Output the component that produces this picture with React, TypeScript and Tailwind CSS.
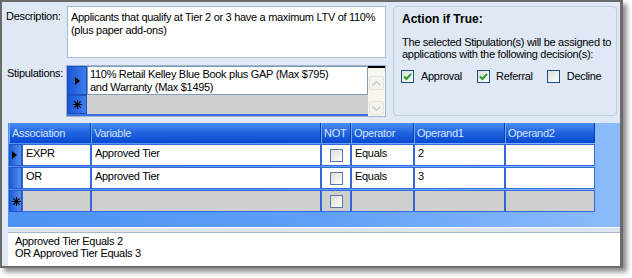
import type { ReactNode } from "react";

function Check({ checked }: { checked?: boolean }) {
  return (
    <span className="flex h-[13px] w-[13px] items-center justify-center border border-[#1c5180] bg-gradient-to-br from-[#dcdcd6] to-white">
      {checked && (
        <svg width="9" height="9" viewBox="0 0 9 9">
          <path d="M1 4.5 L3.5 7 L8 1.8" fill="none" stroke="#21a121" strokeWidth="2" />
        </svg>
      )}
    </span>
  );
}

function GridCheck() {
  return (
    <span className="block h-[13px] w-[13px] border border-[#5b7ca6] bg-gradient-to-br from-[#dcdcd6] to-white" />
  );
}

function Arrow() {
  return (
    <svg width="5" height="8" viewBox="0 0 5 8">
      <path d="M0 0 L5 4 L0 8 Z" fill="#000" />
    </svg>
  );
}

function Star() {
  return (
    <svg width="9" height="9" viewBox="0 0 9 9">
      <path d="M4.5 0 V9 M0 4.5 H9 M1.3 1.3 L7.7 7.7 M7.7 1.3 L1.3 7.7" stroke="#000" strokeWidth="1.2" />
    </svg>
  );
}

const cols = [
  { key: "assoc", w: "w-[69px]" },
  { key: "var", w: "w-[230px]" },
  { key: "not", w: "w-[30px]" },
  { key: "op", w: "w-[63px]" },
  { key: "o1", w: "w-[91px]" },
  { key: "o2", w: "w-[90px]" },
];

const rows = [
  { marker: "arrow", cells: ["EXPR", "Approved Tier", "", "Equals", "2", ""] },
  { marker: "", cells: ["OR", "Approved Tier", "", "Equals", "3", ""] },
];

function HeaderCell({ w, children }: { w: string; children: ReactNode }) {
  return (
    <div
      className={`${w} flex h-full items-center border-r border-[#0b3fa8] bg-gradient-to-b from-[#4a8cf2] via-[#1f63e0] to-[#0848cf] pl-[3px] text-[#d6e5ff] shadow-[inset_1px_0_0_#6fa3f5]`}
    >
      {children}
    </div>
  );
}

function RowHeader({ marker }: { marker: string }) {
  return (
    <div className="flex h-full w-[13px] items-center justify-start border border-[#2254c8] bg-gradient-to-r from-[#1d5bd6] to-[#5590ef] pl-[2px]">
      {marker === "arrow" && <Arrow />}
      {marker === "star" && <Star />}
    </div>
  );
}

export default function App() {
  return (
    <div className="h-[278px] w-[632px] bg-white font-['Liberation_Sans',Arial,sans-serif] text-[11px] leading-[13px] tracking-[-0.3px] text-black">
      <div className="flex h-[268px] w-[623px] flex-col border-b-2 border-l-2 border-r-[3px] border-t-2 border-[#6b6b6b] bg-[#dfe8f4] shadow-[4px_4px_5px_rgba(0,0,0,0.45)]">
        {/* top section */}
        <div className="flex h-[121px] pl-1 pr-[3px] pt-1">
          <div className="flex w-[380px] flex-col">
            <div className="flex">
              <div className="w-[61px] pt-[4px]">Description:</div>
              <div className="h-[52px] w-[319px] border border-[#a5bcd9] bg-white px-[3px] pt-[4px]">
                Applicants that qualify at Tier 2 or 3 have a maximum LTV of 110%
                <br />
                (plus paper add-ons)
              </div>
            </div>
            <div className="mt-[7px] flex">
              <div className="w-[61px] pl-px pt-[2px]">Stipulations:</div>
              <div className="flex h-[52px] w-[320px] border border-[#9db3cf] bg-[#cfcfcf]">
                <div className="flex w-[301px] flex-col">
                  <div className="flex h-[29px]">
                    <div className="flex w-[20px] items-center justify-center border border-[#1c4fc0] bg-gradient-to-r from-[#1a56d2] to-[#3f7ded]">
                      <Arrow />
                    </div>
                    <div className="flex-1 border border-[#7f9db9] bg-white pl-[2px] pt-[1px]">
                      110% Retail Kelley Blue Book plus GAP (Max $795)
                      <br />
                      and Warranty (Max $1495)
                    </div>
                  </div>
                  <div className="flex h-[21px] border-b-2 border-[#3d72e0]">
                    <div className="flex w-[20px] items-center justify-center border border-[#1c4fc0] bg-gradient-to-r from-[#1a56d2] to-[#3f7ded]">
                      <Star />
                    </div>
                    <div className="flex-1 bg-[#cfcfcf]" />
                  </div>
                </div>
                <div className="flex w-[17px] flex-col items-center border-t-2 border-black bg-[#f7f7f0] pt-[8px]">
                  <div className="flex h-[14px] w-[15px] items-center justify-center rounded-[2px] border border-[#e4e4dc] bg-[#f4f4ee]">
                    <svg width="9" height="5" viewBox="0 0 9 5">
                      <path d="M0.5 4.5 L4.5 0.8 L8.5 4.5" fill="none" stroke="#c8c8c0" strokeWidth="1.4" />
                    </svg>
                  </div>
                  <div className="flex-1" />
                  <div className="mb-[1px] flex h-[14px] w-[15px] items-center justify-center rounded-[2px] border border-[#e4e4dc] bg-[#f4f4ee]">
                    <svg width="9" height="5" viewBox="0 0 9 5">
                      <path d="M0.5 0.5 L4.5 4.2 L8.5 0.5" fill="none" stroke="#c8c8c0" strokeWidth="1.4" />
                    </svg>
                  </div>
                </div>
              </div>
            </div>
          </div>
          <div className="ml-[7px] h-[110px] w-[224px] rounded-[4px] border border-[#c3cedb] pl-[8px] pt-[5px]">
            <div className="text-[12px] font-bold leading-[15px] tracking-normal">Action if True:</div>
            <div className="mt-[9px] whitespace-nowrap leading-[12px]">
              The selected Stipulation(s) will be assigned to
              <br />
              applications with the following decision(s):
            </div>
            <div className="mt-[10px] flex items-center">
              <span className="-ml-[1px]">
                <Check checked />
              </span>
              <span className="ml-[7px]">Approval</span>
              <span className="ml-[15px]">
                <Check checked />
              </span>
              <span className="ml-[6px]">Referral</span>
              <span className="ml-[14px]">
                <Check />
              </span>
              <span className="ml-[7px]">Decline</span>
            </div>
          </div>
        </div>

        {/* criteria grid */}
        <div className="ml-[6px] flex h-[104px] w-[612px] flex-col bg-gradient-to-r from-[#4d92f4] via-[#5ea0f6] to-[#8cbcfa] pl-px">
          <div className="flex h-[20px] w-[586px]">
            <HeaderCell w="w-[82px]">Association</HeaderCell>
            <HeaderCell w="w-[230px]">Variable</HeaderCell>
            <HeaderCell w="w-[30px]">NOT</HeaderCell>
            <HeaderCell w="w-[63px]">Operator</HeaderCell>
            <HeaderCell w="w-[91px]">Operand1</HeaderCell>
            <HeaderCell w="w-[90px]">Operand2</HeaderCell>
          </div>
          {rows.map((r, i) => (
            <div key={i} className="mt-px flex h-[22px]">
              <RowHeader marker={r.marker} />
              {cols.map((c, j) => (
                <div
                  key={c.key}
                  className={`${c.w} flex h-full border border-[#3468dc] bg-white ${
                    c.key === "not" ? "items-center justify-center" : "pl-[3px] pt-[2px]"
                  }`}
                >
                  {c.key === "not" ? <GridCheck /> : r.cells[j]}
                </div>
              ))}
            </div>
          ))}
          <div className="mt-px flex h-[22px]">
            <RowHeader marker="star" />
            {cols.map((c) => (
              <div
                key={c.key}
                className={`${c.w} flex h-full items-center justify-center border border-[#3468dc] bg-[#cfcfcf]`}
              >
                {c.key === "not" && <GridCheck />}
              </div>
            ))}
          </div>
        </div>

        <div className="ml-[6px] h-[6px] w-[612px] border-b border-t border-b-[#a9b8cc] border-t-white bg-[#dce6f3]" />

        {/* summary */}
        <div className="ml-[6px] h-[33px] w-[612px] bg-white pl-[7px] pt-[2px] leading-[12px]">
          Approved Tier Equals 2
          <br />
          OR Approved Tier Equals 3
        </div>
      </div>
    </div>
  );
}
